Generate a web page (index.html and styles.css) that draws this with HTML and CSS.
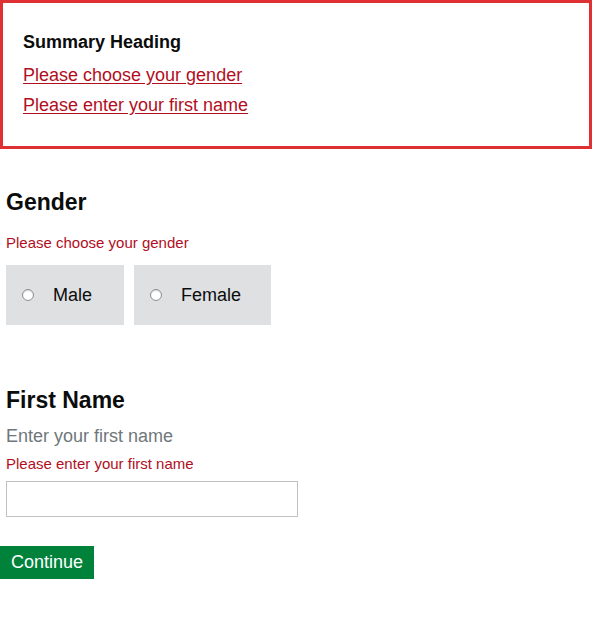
FILE: index.html
```html
<!DOCTYPE html>
<html lang="en">
<head>
<meta charset="utf-8">
<title>Form</title>
<link rel="stylesheet" href="styles.css">
</head>
<body>
<div class="error-summary">
  <h2 class="summary-heading">Summary Heading</h2>
  <ul class="summary-list">
    <li><a href="#gender">Please choose your gender</a></li>
    <li><a href="#first-name">Please enter your first name</a></li>
  </ul>
</div>
<form class="form">
  <fieldset class="group gender-group" id="gender">
    <legend class="field-heading">Gender</legend>
    <p class="error-message">Please choose your gender</p>
    <div class="radios">
      <label class="radio-block male"><input type="radio" name="gender" class="radio"><span>Male</span></label>
      <label class="radio-block female"><input type="radio" name="gender" class="radio"><span>Female</span></label>
    </div>
  </fieldset>
  <div class="group name-group">
    <label class="field-heading" for="first-name">First Name</label>
    <p class="hint">Enter your first name</p>
    <p class="error-message name-error">Please enter your first name</p>
    <input class="text-input" id="first-name" type="text">
  </div>
  <button class="button" type="button">Continue</button>
</form>
</body>
</html>
```
FILE: styles.css
```css
* { box-sizing: border-box; }
html, body {
  margin: 0;
  padding: 0;
  background: #fff;
  font-family: "Liberation Sans", Arial, sans-serif;
  color: #0b0c0c;
}
.error-summary {
  border: 3px solid #df3034;
  padding: 27px 20px 26px;
  width: 592px;
}
.summary-heading {
  margin: 0 0 5px;
  font-size: 18px;
  line-height: 25px;
  font-weight: bold;
}
.summary-list {
  list-style: none;
  margin: 0;
  padding: 0;
}
.summary-list li {
  font-size: 18px;
  line-height: 30px;
}
.summary-list a {
  color: #b10e1e;
  text-decoration: underline;
  text-underline-offset: 2px;
}
.form {
  display: flex;
  flex-direction: column;
  align-items: flex-start;
}
.group {
  margin: 0 0 0 6px;
  padding: 0;
  border: 0;
  display: flex;
  flex-direction: column;
  align-items: flex-start;
}
.gender-group { margin-top: 38px; }
.field-heading {
  display: block;
  padding: 0;
  font-size: 23px;
  line-height: 30px;
  font-weight: bold;
  float: left;
  width: 100%;
}
.error-message {
  margin: 16px 0 0;
  font-size: 15px;
  line-height: 20px;
  color: #b10e1e;
  clear: both;
}
.radios {
  display: flex;
  gap: 10px;
  margin-top: 12px;
}
.radio-block {
  display: flex;
  align-items: center;
  height: 60px;
  padding: 0 28px 0 16px;
  background: #dee0e2;
  font-size: 18px;
  gap: 19px;
}
.male { width: 118px; }
.female { width: 137px; }
.radio {
  appearance: none;
  -webkit-appearance: none;
  margin: 0;
  flex: none;
  width: 12px;
  height: 12px;
  border-radius: 50%;
  border: 1px solid #8e8e8e;
  background: #fff;
  box-shadow: inset 0 1px 1px rgba(0,0,0,0.15);
}
.name-group { margin-top: 60px; }
.hint {
  margin: 9px 0 0;
  font-size: 18px;
  line-height: 25px;
  color: #6f777b;
}
.name-error { margin-top: 5px; }
.text-input {
  margin-top: 7px;
  width: 292px;
  height: 36px;
  border: 1px solid #bfc1c3;
  font-size: 18px;
  font-family: inherit;
  padding: 4px;
}
.button {
  margin-top: 29px;
  height: 33px;
  width: 94px;
  padding: 0;
  border: 0;
  background: #00823b;
  color: #fff;
  font-family: inherit;
  font-size: 18px;
  line-height: 33px;
  box-shadow: 0 3px 0 #003618;
  cursor: pointer;
}
```
